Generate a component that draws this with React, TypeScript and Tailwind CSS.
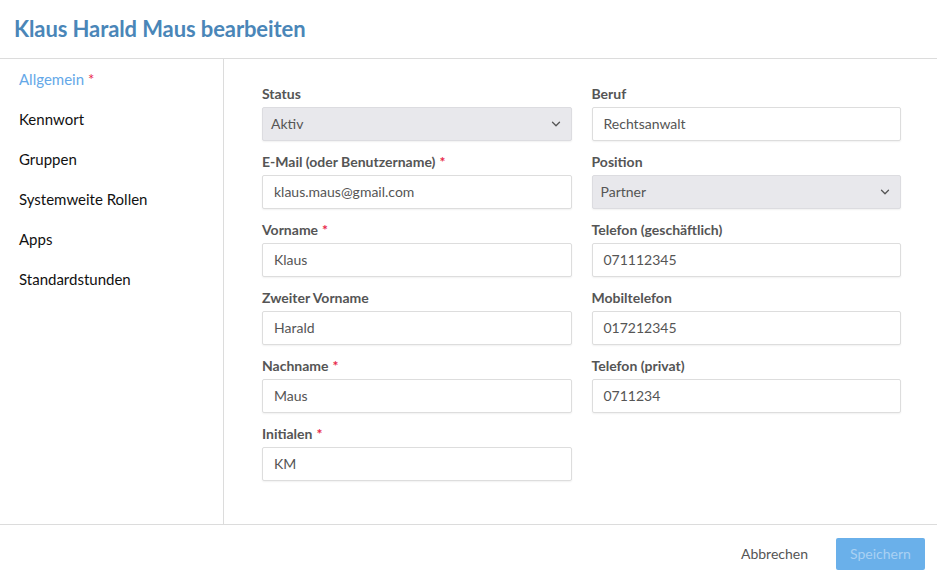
import { ChevronDown } from "lucide-react";

type Field = {
  label: string;
  value: string;
  required?: boolean;
  select?: boolean;
};

const leftFields: Field[] = [
  { label: "Status", value: "Aktiv", select: true },
  { label: "E-Mail (oder Benutzername)", value: "klaus.maus@gmail.com", required: true },
  { label: "Vorname", value: "Klaus", required: true },
  { label: "Zweiter Vorname", value: "Harald" },
  { label: "Nachname", value: "Maus", required: true },
  { label: "Initialen", value: "KM", required: true },
];

const rightFields: Field[] = [
  { label: "Beruf", value: "Rechtsanwalt" },
  { label: "Position", value: "Partner", select: true },
  { label: "Telefon (geschäftlich)", value: "071112345" },
  { label: "Mobiltelefon", value: "017212345" },
  { label: "Telefon (privat)", value: "0711234" },
];

const navItems = ["Allgemein", "Kennwort", "Gruppen", "Systemweite Rollen", "Apps", "Standardstunden"];

function FormField({ field }: { field: Field }) {
  return (
    <div className="flex flex-col">
      <label className="h-[18px] leading-[18px] mb-[4px] text-[14px] font-bold text-[#555]">
        {field.label}
        {field.required && <span className="text-[#e8264a] ml-1">*</span>}
      </label>
      {field.select ? (
        <div className="h-[34px] flex items-center justify-between bg-[#e8e8ec] border border-[#dcdce0] rounded-[2px] pl-2 pr-[8px] pb-px text-[14px] text-[#555] shadow-[0_1px_2px_rgba(0,0,0,0.06)]">
          <span>{field.value}</span>
          <ChevronDown className="w-[14px] h-[14px] text-[#555]" strokeWidth={2.25} />
        </div>
      ) : (
        <div className="h-[34px] flex items-center bg-white border border-[#dddddd] rounded-[2px] px-[11px] pb-px text-[14px] text-[#555] shadow-[0_1px_2px_rgba(0,0,0,0.06)]">
          {field.value}
        </div>
      )}
    </div>
  );
}

export default function App() {
  return (
    <div className="w-[937px] h-[582px] bg-white flex flex-col font-['Lato',sans-serif]">
      <div className="h-[59px] border-b border-[#dcdcdc] flex items-center px-[14px] pb-[2px]">
        <h1 className="text-[22px] font-bold text-[#4a86b8] tracking-[-0.1px]">Klaus Harald Maus bearbeiten</h1>
      </div>

      <div className="h-[465px] flex">
        <nav className="w-[224px] border-r border-[#dcdcdc] flex flex-col">
          {navItems.map((item, i) => (
            <div
              key={item}
              className={`h-[40px] flex items-center px-[19px] text-[15px] ${
                i === 0 ? "text-[#64a8e8]" : "text-[#111]"
              }`}
            >
              {item}
              {i === 0 && <span className="text-[#e8264a] ml-1">*</span>}
            </div>
          ))}
        </nav>

        <div className="flex-1 pt-[26px] pl-[38px] pr-[36px] grid grid-cols-2 gap-x-5 content-start">
          <div className="flex flex-col gap-[12px]">
            {leftFields.map((f) => (
              <FormField key={f.label} field={f} />
            ))}
          </div>
          <div className="flex flex-col gap-[12px]">
            {rightFields.map((f) => (
              <FormField key={f.label} field={f} />
            ))}
          </div>
        </div>
      </div>

      <div className="h-[58px] border-t border-[#dcdcdc] flex items-center justify-end gap-4 pr-3">
        <button className="h-8 px-3 text-[14px] text-[#555]">Abbrechen</button>
        <button className="h-8 w-[89px] rounded-[2px] bg-[#6ab0ea] text-[14px] text-[#a9d1f3]">Speichern</button>
      </div>
    </div>
  );
}
